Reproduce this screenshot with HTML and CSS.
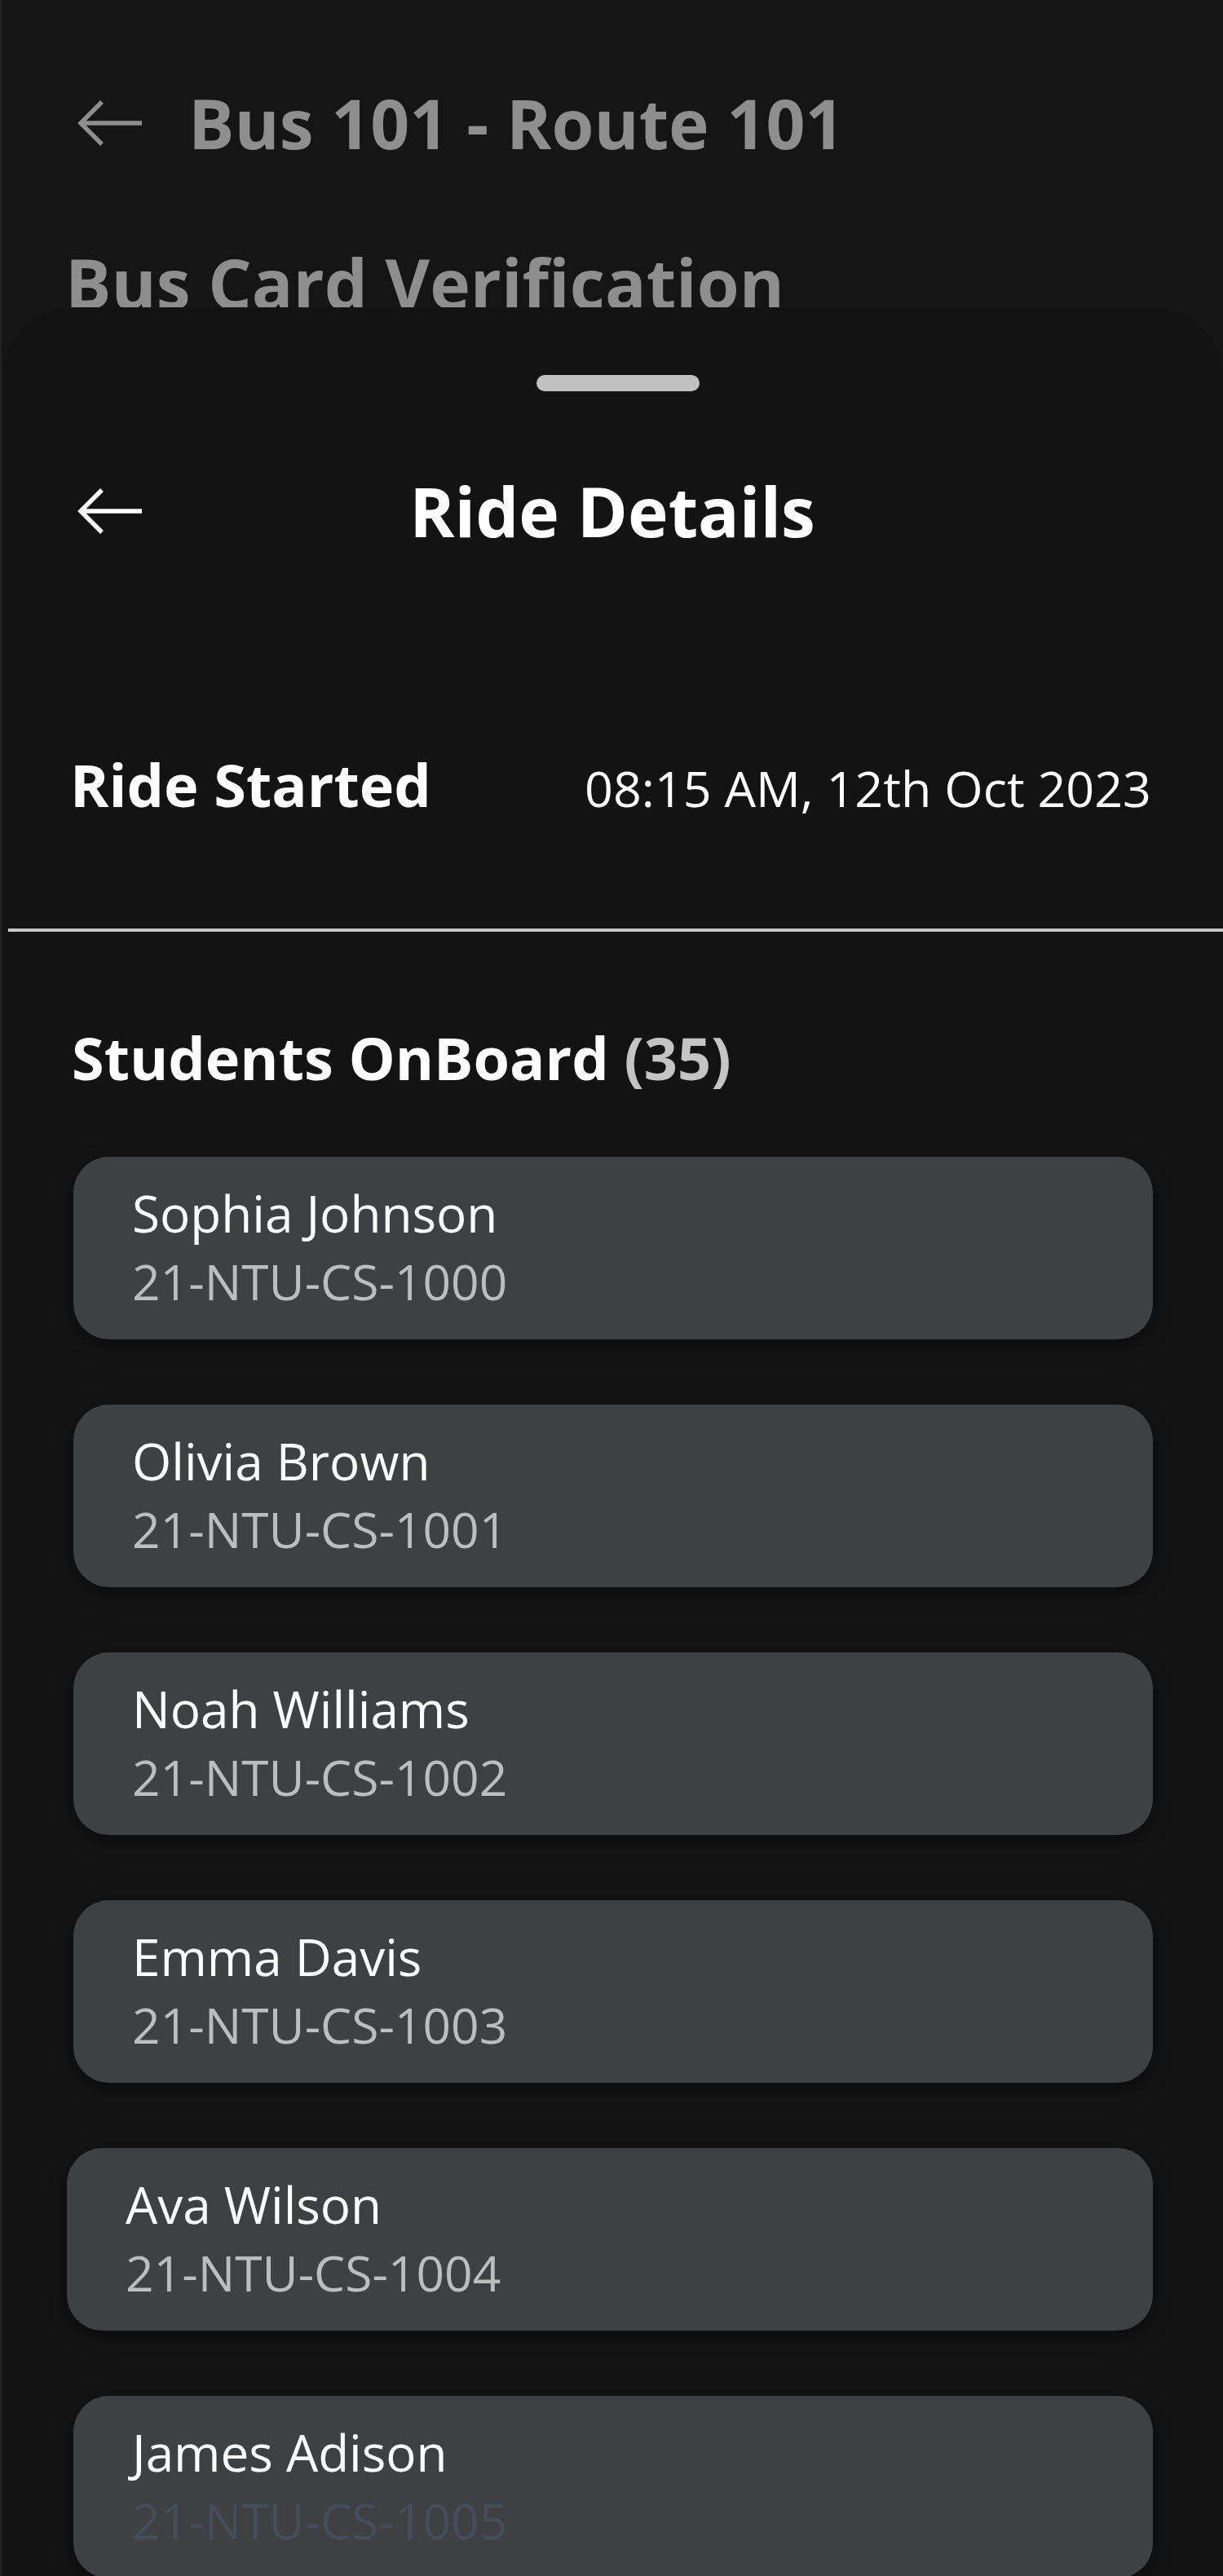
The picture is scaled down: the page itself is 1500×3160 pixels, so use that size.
FILE: index.html
```html
<!DOCTYPE html>
<html lang="en">
<head>
<meta charset="utf-8">
<title>Ride Details</title>
<link rel="stylesheet" href="styles.css">
</head>
<body>
<div class="screen">
  <div class="backdrop">
    <div class="top-bar">
      <svg class="arrow arrow--muted" width="80" height="56" viewBox="0 0 80 56" aria-hidden="true"><path d="M80 28H6M31 2L5 28L31 54" fill="none" stroke="currentColor" stroke-width="5.5" stroke-linejoin="miter"/></svg>
      <h1 class="top-title">Bus 101 - Route 101</h1>
    </div>
    <h2 class="bg-title">Bus Card Verification</h2>
  </div>

  <section class="sheet">
    <div class="handle"></div>
    <header class="sheet-header">
      <svg class="arrow" width="80" height="56" viewBox="0 0 80 56" aria-hidden="true"><path d="M80 28H6M31 2L5 28L31 54" fill="none" stroke="currentColor" stroke-width="5.5" stroke-linejoin="miter"/></svg>
      <h2 class="sheet-title">Ride Details</h2>
      <span></span>
    </header>

    <div class="ride-row">
      <span class="ride-label">Ride Started</span>
      <span class="ride-value">08:15 AM, 12th Oct 2023</span>
    </div>

    <div class="divider"></div>

    <h3 class="students-heading">Students OnBoard <span class="count">(35)</span></h3>

    <ul class="student-list">
      <li class="card"><span class="name">Sophia Johnson</span><span class="sid">21-NTU-CS-1000</span></li>
      <li class="card"><span class="name">Olivia Brown</span><span class="sid">21-NTU-CS-1001</span></li>
      <li class="card"><span class="name">Noah Williams</span><span class="sid">21-NTU-CS-1002</span></li>
      <li class="card"><span class="name">Emma Davis</span><span class="sid">21-NTU-CS-1003</span></li>
      <li class="card card--shift"><span class="name">Ava Wilson</span><span class="sid">21-NTU-CS-1004</span></li>
      <li class="card"><span class="name">James Adison</span><span class="sid sid--faded">21-NTU-CS-1005</span></li>
    </ul>
  </section>
</div>
</body>
</html>
```

FILE: styles.css
```css
* { box-sizing: border-box; }

html, body {
  margin: 0;
  padding: 0;
  background: #151515;
}

body {
  font-family: "Open Sans", "Noto Sans", sans-serif;
  color: #ffffff;
}

.screen {
  width: 1500px;
  height: 3160px;
  overflow: hidden;
  border-left: 2px solid #222222;
  background: #151515;
}

/* Background page, partly covered by the sheet */
.backdrop {
  height: 377px;
  overflow: hidden;
  color: #8e8e8e;
}

.top-bar {
  display: flex;
  align-items: center;
  gap: 57px;
  height: 100px;
  margin-top: 101px;
  padding-left: 92px;
}

.arrow {
  display: block;
  flex: none;
  color: #ffffff;
}

.arrow--muted { color: #8e8e8e; }

.top-title {
  margin: 0;
  font-size: 84px;
  line-height: 100px;
  font-weight: 700;
  white-space: nowrap;
}

.bg-title {
  margin: 96px 0 0;
  padding-left: 78px;
  font-size: 84px;
  line-height: 100px;
  font-weight: 700;
  white-space: nowrap;
}

/* Bottom sheet */
.sheet {
  background: #131313;
  border-top-left-radius: 88px;
  border-top-right-radius: 88px;
  min-height: 2800px;
  display: flex;
  flex-direction: column;
}

.handle {
  width: 200px;
  height: 20px;
  border-radius: 10px;
  background: #c1c1c1;
  margin: 83px 0 0 656px;
}

.sheet-header {
  display: grid;
  grid-template-columns: 1fr auto 1fr;
  align-items: center;
  height: 100px;
  margin-top: 97px;
  padding: 0 92px;
}

.sheet-title {
  margin: 0;
  font-size: 84px;
  line-height: 100px;
  font-weight: 700;
  white-space: nowrap;
}

.ride-row {
  display: flex;
  justify-content: space-between;
  align-items: baseline;
  margin-top: 235px;
  padding: 0 88px 0 84px;
  line-height: 100px;
}

.ride-label {
  font-size: 72px;
  font-weight: 700;
}

.ride-value {
  font-size: 61px;
  font-weight: 400;
}

.divider {
  height: 4px;
  background: #c8c8c8;
  margin: 122px 0 0 8px;
}

.students-heading {
  margin: 104px 0 0;
  padding-left: 86px;
  font-size: 72px;
  line-height: 100px;
  font-weight: 700;
}

.count { color: #c4c4c4; }

.student-list {
  list-style: none;
  margin: 72px 0 0;
  padding: 0;
  display: flex;
  flex-direction: column;
  gap: 80px;
}

.card {
  display: flex;
  flex-direction: column;
  height: 224px;
  margin: 0 86px 0 88px;
  padding: 27px 72px;
  background: #3f4042;
  border-radius: 44px;
  box-shadow: 0 6px 22px rgba(0, 0, 0, 0.35);
}

.card--shift {
  margin-left: 80px;
  padding-left: 72px;
}

.name {
  font-size: 62px;
  font-weight: 500;
  line-height: 84px;
  color: #ffffff;
}

.sid {
  font-size: 60.5px;
  font-weight: 400;
  line-height: 84px;
  color: #bdbdbd;
}

.sid--faded { color: #454d5b; }
```
